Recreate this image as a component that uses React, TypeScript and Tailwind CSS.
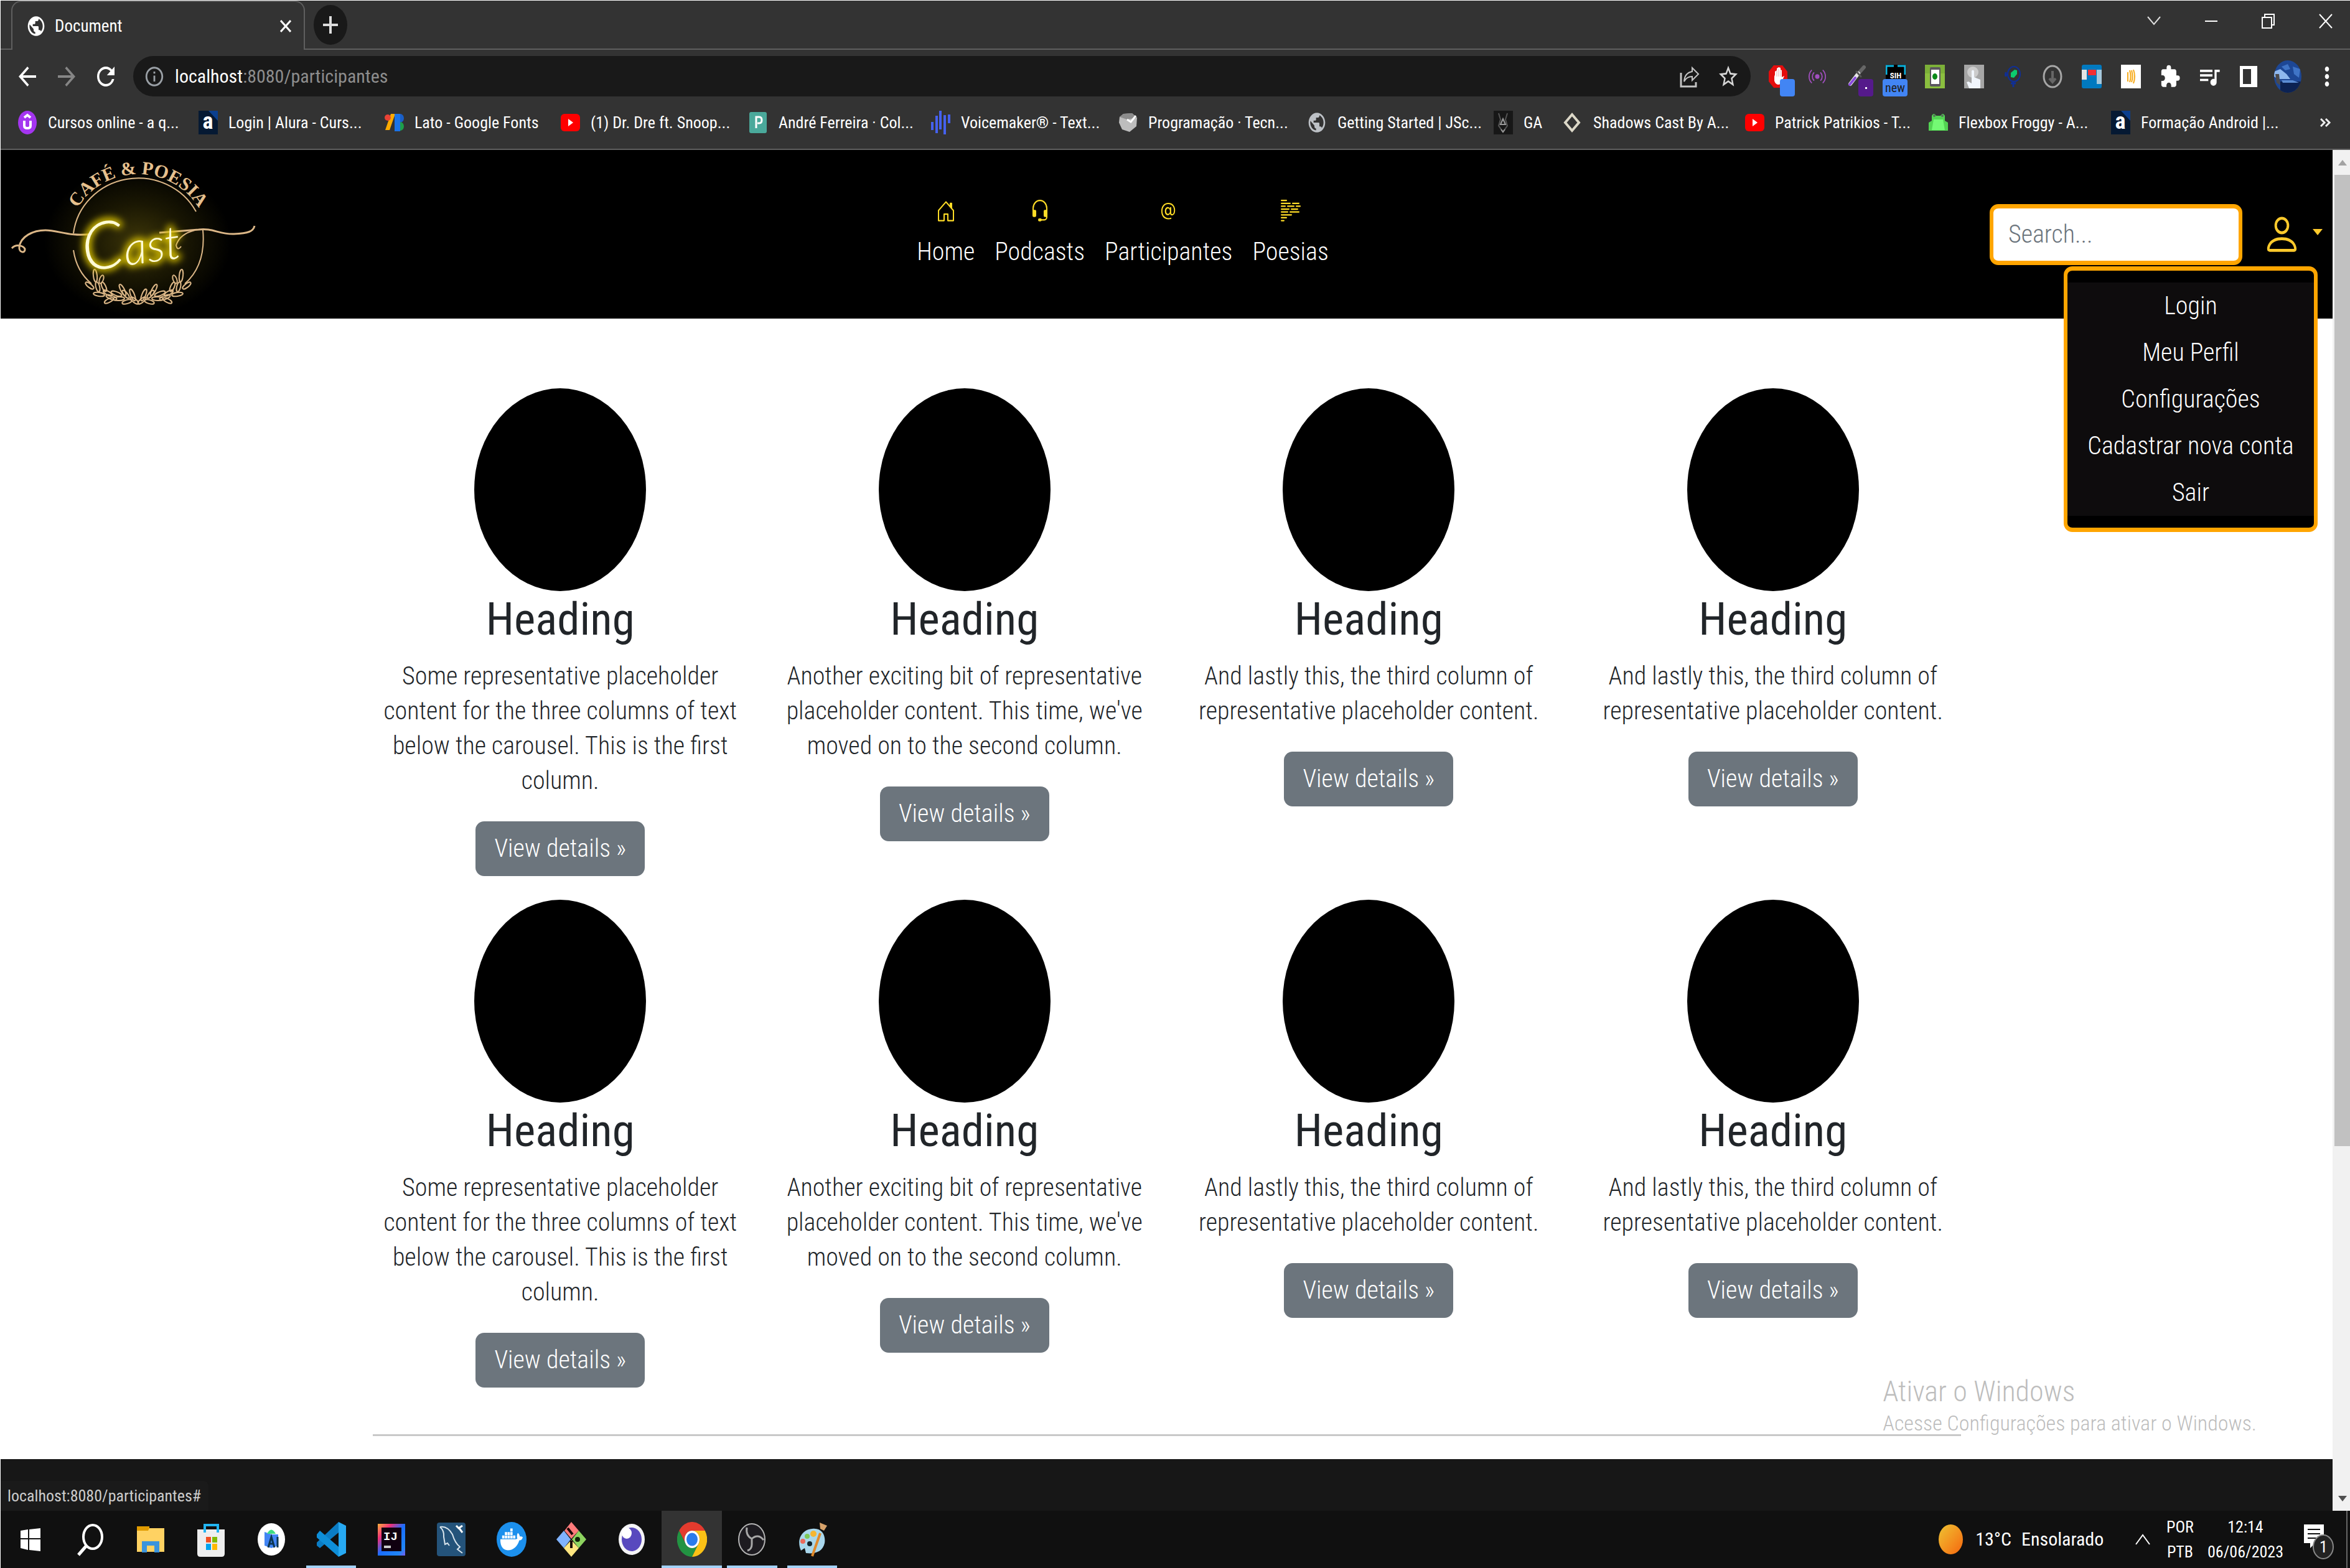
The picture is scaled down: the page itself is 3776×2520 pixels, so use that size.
import type { ReactNode } from "react";
import {
  MdArrowBack,
  MdArrowForward,
  MdRefresh,
  MdInfoOutline,
  MdStarBorder,
  MdExtension,
  MdQueueMusic,
  MdMoreVert,
  MdPublic,
} from "react-icons/md";
import { BsHouseDoor, BsHeadset, BsAt, BsBodyText, BsPerson, BsBroadcast } from "react-icons/bs";
import { FaDocker } from "react-icons/fa";

const fill = { preserveAspectRatio: "none" as const };

/* ---------- Browser chrome ---------- */

function TabStrip() {
  return (
    <div className="flex h-[79px] items-stretch">
      <div className="w-[17px] border-b-2 border-[#5f5f5f]" />
      <div className="flex w-[472px] items-center rounded-t-[16px] border-x-2 border-t-2 border-[#5f5f5f] pl-[22px] pr-[20px]">
        <MdPublic {...fill} className="h-[38px] w-[32px] text-white" />
        <span className="ml-[14px] flex-1 text-[27px] leading-[36px] text-white">Document</span>
        <button aria-label="Fechar guia" className="flex">
          <svg viewBox="0 0 18 20" className="h-[20px] w-[18px]" stroke="#fff" strokeWidth="3">
            <path d="M1 1L17 19M17 1L1 19" />
          </svg>
        </button>
      </div>
      <div className="flex flex-1 items-center border-b-2 border-[#5f5f5f] pl-[14px]">
        <button aria-label="Nova guia" className="flex h-[64px] w-[54px] items-center justify-center rounded-[50%] bg-[#191919]">
          <svg viewBox="0 0 24 28" className="h-[28px] w-[24px]" stroke="#ddd" strokeWidth="4">
            <path d="M12 0V28M0 14H24" />
          </svg>
        </button>
        <div className="ml-auto flex items-center pb-[12px] pr-[28px]">
          <button aria-label="Pesquisar guias" className="mr-[70px] flex">
            <svg viewBox="0 0 22 22" className="h-[22px] w-[22px]" fill="none" stroke="#ddd" strokeWidth="2">
              <path d="M1 4L11 16L21 4" />
            </svg>
          </button>
          <button aria-label="Minimizar" className="mr-[70px] flex">
            <svg viewBox="0 0 22 24" className="h-[24px] w-[22px]" stroke="#fff" strokeWidth="2">
              <path d="M1 12H21" />
            </svg>
          </button>
          <button aria-label="Restaurar" className="mr-[70px] flex">
            <svg viewBox="0 0 22 24" className="h-[24px] w-[22px]" fill="none" stroke="#fff" strokeWidth="2">
              <path d="M1 6H16V23H1ZM5 6V1H20V18H16" />
            </svg>
          </button>
          <button aria-label="Fechar" className="flex">
            <svg viewBox="0 0 22 24" className="h-[24px] w-[22px]" stroke="#fff" strokeWidth="2">
              <path d="M1 1L21 23M21 1L1 23" />
            </svg>
          </button>
        </div>
      </div>
    </div>
  );
}

function ExtIcon({ label, children, badge }: { label: string; children: ReactNode; badge?: ReactNode }) {
  return (
    <button aria-label={label} className="relative flex h-[65px] w-[63px] items-center justify-center">
      {children}
      {badge}
    </button>
  );
}

function Extensions() {
  return (
    <div className="flex items-center">
      <ExtIcon
        label="Bloqueador"
        badge={<span className="absolute bottom-0 left-[35px] h-[28px] w-[24px] rounded-[4px] bg-[#4285f4]" />}
      >
        <svg viewBox="0 0 32 38" className="h-[38px] w-[32px]">
          <path d="M9 1H23L31 11V27L23 37H9L1 27V11Z" fill="#e40d0d" />
          <path d="M11 11V19L10 16V26Q12 32 17 32Q22 31 23 25L26 18L22 20V9L20 8V5L17 4L14 6V9Z" fill="#fff" />
          <path d="M14 9V19M17 7V19M20 9V19" stroke="#e9b0b0" strokeWidth="1" />
        </svg>
      </ExtIcon>
      <ExtIcon label="Transmissão">
        <BsBroadcast {...fill} className="h-[30px] w-[28px] text-[#a24fc0]" />
      </ExtIcon>
      <ExtIcon
        label="Conta-gotas"
        badge={
          <span className="absolute bottom-0 left-[35px] flex h-[28px] w-[24px] items-center justify-center rounded-[4px] bg-[#551a8b]">
            <span className="h-[3px] w-[3px] bg-white" />
          </span>
        }
      >
        <svg viewBox="0 0 32 38" className="h-[38px] w-[32px]" strokeLinecap="round">
          <path d="M20 13L28 4" stroke="#666" strokeWidth="6" />
          <path d="M6 31L19 14" stroke="#e6e6e6" strokeWidth="6" />
          <path d="M5 32L14 21" stroke="#8a4bdc" strokeWidth="4" />
          <path d="M16 11L23 19" stroke="#555" strokeWidth="3" />
        </svg>
      </ExtIcon>
      <ExtIcon
        label="SteamDB"
        badge={
          <span className="absolute bottom-0 left-[11px] h-[28px] w-[40px] rounded-[4px] bg-[#4285f4] text-center text-[20px] font-normal leading-[28px] text-[#202124]">
            new
          </span>
        }
      >
        <svg viewBox="0 0 32 38" className="h-[38px] w-[32px]">
          <rect width="32" height="38" rx="3" fill="#000" />
          <path d="M1 16V2H13M19 2H31V16" fill="none" stroke="#0bb4e0" strokeWidth="3" />
          <text x="16" y="22" fontSize="13" fontWeight="700" textAnchor="middle" fill="#fff">
            SIH
          </text>
        </svg>
      </ExtIcon>
      <ExtIcon label="Dispositivo">
        <svg viewBox="0 0 32 38" className="h-[38px] w-[32px]">
          <rect width="32" height="38" fill="#8bbf3f" />
          <path d="M0 14L32 14V0H0Z" fill="#7cb038" />
          <rect x="8" y="4" width="17" height="31" rx="2" fill="#5b5660" />
          <rect x="10" y="8" width="13" height="23" fill="#fff" />
          <ellipse cx="16" cy="19" rx="4" ry="5" fill="#0a8a1a" />
        </svg>
      </ExtIcon>
      <ExtIcon label="Toque">
        <svg viewBox="0 0 32 38" className="h-[38px] w-[32px]">
          <rect width="32" height="38" fill="#a6a6a6" />
          <circle cx="14" cy="12" r="9" fill="#ccc" />
          <path d="M12 10Q14 7 16 10V20L26 24V38H8L4 28L7 27L12 30Z" fill="#f1f6fc" />
        </svg>
      </ExtIcon>
      <ExtIcon label="Microfone">
        <svg viewBox="0 0 32 38" className="h-[38px] w-[32px]" fill="none">
          <ellipse cx="17" cy="15" rx="10" ry="12" stroke="#102f95" strokeWidth="2" />
          <path d="M2 16H7M4 12V19M16 27V36M12 30H20" stroke="#102f95" strokeWidth="3" />
          <path d="M12 13L18 8L22 9V15L17 21L12 20Z" fill="#0ccb6f" />
        </svg>
      </ExtIcon>
      <ExtIcon label="Download">
        <svg viewBox="0 0 32 38" className="h-[38px] w-[32px]" fill="none">
          <ellipse cx="16" cy="19" rx="14" ry="17" stroke="#a6a6a6" strokeWidth="3" />
          <path d="M16 10V26M11 22L16 28L21 22" stroke="#666" strokeWidth="4" />
        </svg>
      </ExtIcon>
      <ExtIcon label="Trello">
        <svg viewBox="0 0 32 38" className="h-[38px] w-[32px]">
          <rect width="32" height="38" rx="3" fill="#0079bf" />
          <rect y="8" width="8" height="16" fill="#e3e3e3" />
          <rect x="10" y="8" width="13" height="9" fill="#f22f33" />
          <rect x="24" y="8" width="8" height="23" fill="#a5c8dc" />
        </svg>
      </ExtIcon>
      <ExtIcon label="Áudio">
        <svg viewBox="0 0 32 38" className="h-[38px] w-[32px]">
          <rect width="32" height="38" fill="#fff" />
          <path d="M11 12V27M14 9Q17 19 14 28M17 9Q20 19 17 28M20 8Q24 19 20 30" fill="none" stroke="#f7ab1b" strokeWidth="2" />
        </svg>
      </ExtIcon>
      <ExtIcon label="Extensões">
        <MdExtension {...fill} className="h-[40px] w-[34px] text-white" />
      </ExtIcon>
      <ExtIcon label="Controle de mídia">
        <MdQueueMusic {...fill} className="h-[44px] w-[40px] text-white" />
      </ExtIcon>
      <ExtIcon label="Painel lateral">
        <svg viewBox="0 0 28 34" className="h-[34px] w-[28px]">
          <path d="M0 0H28V34H0ZM5 5V29H18V5Z" fill="#fff" fillRule="evenodd" />
        </svg>
      </ExtIcon>
      <ExtIcon label="Perfil">
        <svg viewBox="0 0 44 52" className="h-[52px] w-[44px]">
          <defs>
            <clipPath id="avatar">
              <ellipse cx="22" cy="26" rx="22" ry="26" />
            </clipPath>
          </defs>
          <g clipPath="url(#avatar)">
            <rect width="44" height="52" fill="#1d4795" />
            <path d="M0 18L10 14L20 22L26 30H6L0 26Z" fill="#8fb8ee" />
            <path d="M12 10L22 6L26 14L18 16ZM30 10L42 14L40 28L32 22Z" fill="#3f74c6" />
            <path d="M10 34H44V52H10Z" fill="#0c2252" />
            <path d="M2 22H8L10 40L4 36Z" fill="#4b4a4c" />
            <path d="M12 32H30L40 36H14Z" fill="#5b8cd2" />
          </g>
        </svg>
      </ExtIcon>
      <ExtIcon label="Menu">
        <MdMoreVert {...fill} className="h-[48px] w-[40px] text-white" />
      </ExtIcon>
    </div>
  );
}

function Toolbar() {
  return (
    <div className="flex h-[85px] items-center pl-[22px] pr-[6px]">
      <button aria-label="Voltar" className="flex w-[63px]">
        <MdArrowBack {...fill} className="h-[48px] w-[42px] text-white" />
      </button>
      <button aria-label="Avançar" className="flex w-[63px]">
        <MdArrowForward {...fill} className="h-[48px] w-[42px] text-[#868686]" />
      </button>
      <button aria-label="Recarregar" className="flex w-[65px]">
        <MdRefresh {...fill} className="h-[48px] w-[42px] text-white" />
      </button>
      <div className="flex h-[65px] flex-1 items-center rounded-full bg-[#191919] pl-[17px] pr-[18px]">
        <MdInfoOutline {...fill} className="h-[38px] w-[34px] text-[#9aa0a6]" />
        <label className="relative ml-[16px] flex-1 text-[30px] leading-[40px]">
          <span className="text-white">localhost</span>
          <span className="text-[#8d8d8d]">:8080/participantes</span>
          <input aria-label="Endereço" className="absolute inset-0 w-full bg-transparent outline-none" />
        </label>
        <button aria-label="Compartilhar" className="mr-[28px] flex">
          <svg viewBox="0 0 32 36" className="h-[36px] w-[32px]" fill="none" stroke="#c4c4c4" strokeWidth="3">
            <path d="M2 12V34H26V27" />
            <path d="M20 4L30 14L20 24V18Q11 18 7 26Q8 12 20 10Z" strokeWidth="2" />
          </svg>
        </button>
        <button aria-label="Favoritos" className="flex">
          <MdStarBorder {...fill} className="h-[42px] w-[36px] text-[#d6d6d6]" />
        </button>
      </div>
      <div className="w-[12px]" />
      <Extensions />
    </div>
  );
}

const alura = (
  <svg viewBox="0 0 31 38" className="h-[38px] w-[31px] overflow-visible">
    <rect width="31" height="38" fill="#051933" />
    <path d="M16 0H31V16Z" fill="#0b3f8f" />
    <text x="15" y="29" fontSize="36" fontWeight="700" textAnchor="middle" fill="#fff">
      a
    </text>
  </svg>
);

const youtube = (
  <svg viewBox="0 0 31 28" className="h-[28px] w-[31px]">
    <rect width="31" height="28" rx="6" fill="#f00" />
    <path d="M12 8L20 14L12 20Z" fill="#fff" />
  </svg>
);

const bookmarks: { text: string; width: string; icon: ReactNode }[] = [
  {
    text: "Cursos online - a q...",
    width: "w-[290px]",
    icon: (
      <svg viewBox="0 0 31 38" className="h-[38px] w-[31px]">
        <ellipse cx="15" cy="19" rx="15" ry="19" fill="#a435f0" />
        <path d="M10 16V24Q10 28 15 28T20 24V16M10 11L15 7L20 11" fill="none" stroke="#fff" strokeWidth="4" />
      </svg>
    ),
  },
  { text: "Login | Alura - Curs...", width: "w-[299px]", icon: alura },
  {
    text: "Lato - Google Fonts",
    width: "w-[283px]",
    icon: (
      <svg viewBox="0 0 31 28" className="h-[28px] w-[31px]">
        <path d="M10 0H17L8 26H1Z" fill="#fbab00" />
        <rect x="16" width="9" height="28" fill="#1a73e8" />
        <circle cx="5" cy="6" r="5" fill="#ea4335" />
        <path d="M25 0A6 7 0 0 1 25 14Z" fill="#1a5fc8" />
        <path d="M25 13A6 7 0 0 1 25 27Z" fill="#1e9e4a" />
      </svg>
    ),
  },
  { text: "(1) Dr. Dre ft. Snoop...", width: "w-[302px]", icon: youtube },
  {
    text: "André Ferreira · Col...",
    width: "w-[293px]",
    icon: (
      <svg viewBox="0 0 31 34" className="h-[34px] w-[31px]">
        <rect x="1" width="28" height="34" rx="3" fill="#4aa99b" />
        <path d="M12 26V8H17Q21 8 21 13T17 18H14" fill="none" stroke="#fff" strokeWidth="3" />
      </svg>
    ),
  },
  {
    text: "Voicemaker® - Text...",
    width: "w-[301px]",
    icon: (
      <svg viewBox="0 0 31 38" className="h-[38px] w-[31px]" stroke="#4561ef" strokeWidth="4">
        <path d="M2 18V31M9 8V36M15 0V30M22 7V38M29 6V20" />
      </svg>
    ),
  },
  {
    text: "Programação · Tecn...",
    width: "w-[303px]",
    icon: (
      <svg viewBox="0 0 31 32" className="h-[32px] w-[31px]">
        <path d="M8 2L22 1L30 8L29 22L18 31L6 27L1 16L2 7Z" fill="#bdbdbd" />
        <path d="M2 7L14 11L30 8L22 1L8 2Z" fill="#8c8c8c" />
        <path d="M14 11L20 15L28 5" fill="none" stroke="#fff" strokeWidth="3" />
      </svg>
    ),
  },
  {
    text: "Getting Started | JSc...",
    width: "w-[300px]",
    icon: <MdPublic {...fill} className="h-[38px] w-[32px] text-[#bdc1c6]" />,
  },
  {
    text: "GA",
    width: "w-[112px]",
    icon: (
      <svg viewBox="0 0 31 38" className="h-[38px] w-[31px]" fill="none">
        <rect width="31" height="38" fill="#171717" />
        <path d="M8 4L11 14L8 24L15 34L22 24L19 14L22 4" stroke="#555" strokeWidth="2" />
        <path d="M11 22L15 13L19 22ZM12 30L15 34L18 30" stroke="#999" strokeWidth="2" />
      </svg>
    ),
  },
  {
    text: "Shadows Cast By A...",
    width: "w-[292px]",
    icon: (
      <svg viewBox="0 0 31 34" className="h-[34px] w-[31px]" fill="none">
        <path d="M14 4L25 17L14 30L3 17Z" stroke="#dcd8c8" strokeWidth="4" />
      </svg>
    ),
  },
  { text: "Patrick Patrikios - T...", width: "w-[295px]", icon: youtube },
  {
    text: "Flexbox Froggy - A...",
    width: "w-[293px]",
    icon: (
      <svg viewBox="0 0 31 30" className="h-[30px] w-[31px]">
        <path d="M5 8V4Q8 -2 12 4H19Q23 -2 26 4V12L31 15V28H0V15L5 12Z" fill="#53d453" />
        <path d="M8 10H23L26 27H5Z" fill="#74fa74" />
        <circle cx="9" cy="4" r="2" fill="#54735a" />
        <circle cx="22" cy="4" r="2" fill="#54735a" />
      </svg>
    ),
  },
  { text: "Formação Android |...", width: "w-[290px]", icon: alura },
];

function BookmarksBar() {
  return (
    <nav aria-label="Favoritos" className="flex h-[76px] items-center border-b-2 border-[#5f5f5f] pb-[10px] pl-[28px] pr-[30px]">
      {bookmarks.map((b) => (
        <a key={b.text} href="#" className={`flex shrink-0 items-center ${b.width}`}>
          {b.icon}
          <span className="ml-[17px] whitespace-nowrap text-[26px] leading-[36px] text-white">{b.text}</span>
        </a>
      ))}
      <button aria-label="Mais favoritos" className="ml-auto flex">
        <svg viewBox="0 0 18 14" className="h-[14px] w-[18px]" fill="none" stroke="#eee" strokeWidth="3">
          <path d="M1 1L7 7L1 13M9 1L15 7L9 13" />
        </svg>
      </button>
    </nav>
  );
}

/* ---------- Site ---------- */

const leaves: [number, number, number, number][] = [
  [152, 201, 10, -6],
  [162, 207, 7, 20],
  [143, 217, 8, -52],
  [156, 219, 8, -14],
  [166, 219, 8, -24],
  [158, 231, 9, -82],
  [172, 229, 8, -60],
  [178, 236, 9, -70],
  [186, 230, 9, -70],
  [196, 224, 10, -28],
  [174, 241, 8, 62],
  [190, 238, 9, 88],
  [201, 231, 8, -40],
  [203, 243, 8, 74],
  [212, 232, 10, -22],
  [215, 241, 8, -50],
];

function Logo() {
  return (
    <svg viewBox="0 0 430 270" className="h-[270px] w-[410px]" preserveAspectRatio="xMinYMid slice" aria-label="Café & Poesia Cast">
      <defs>
        <radialGradient id="halo">
          <stop offset="0" stopColor="#3d3608" />
          <stop offset="0.5" stopColor="#1a1703" />
          <stop offset="1" stopColor="#000" />
        </radialGradient>
        <filter id="neon" x="-40%" y="-40%" width="180%" height="180%">
          <feGaussianBlur stdDeviation="6" />
        </filter>
        <path id="arc" d="M109 146A112 108 0 0 1 333 146" />
      </defs>
      <ellipse cx="220" cy="146" rx="150" ry="120" fill="url(#halo)" />
      <g fill="none" stroke="#dcb787" strokeWidth="2">
        <path d="M117 133A105 101 0 0 1 314 98" />
        <path d="M117 160Q122 194 146 214M325 128Q330 184 296 214" />
        <g strokeWidth="3">
          <path d="M18 157C24 150 36 152 39 158C40 166 29 164 30 155C32 138 52 128 72 128S112 139 146 134" />
          <path d="M255 132L318 127C340 124 352 135 375 134S406 130 408 121" />
        </g>
        <path d="M312 128Q288 134 282 152Q284 162 290 154" />
        {leaves.map(([x, y, r, a], i) => (
          <g key={i}>
            <ellipse cx={x} cy={y} rx="3" ry={r} transform={`rotate(${a} ${x} ${y})`} />
            <ellipse cx={442 - x} cy={y} rx="3" ry={r} transform={`rotate(${-a} ${442 - x} ${y})`} />
          </g>
        ))}
      </g>
      <text fontFamily="'Liberation Serif', serif" fontSize="30" fontWeight="700" fill="#e6c08e">
        <textPath href="#arc" startOffset="50%" textAnchor="middle">
          CAFÉ &amp; POESIA
        </textPath>
      </text>
      <g fontFamily="Lato, sans-serif" fontStyle="italic" fontWeight="300" fontSize="74" transform="rotate(-8 220 150)">
        <text x="130" y="182" fill="#d8c000" stroke="#d8c000" strokeWidth="8" filter="url(#neon)">
          <tspan fontSize="106">C</tspan>ast
        </text>
        <text x="130" y="182" fill="#fffbd6">
          <tspan fontSize="106">C</tspan>ast
        </text>
      </g>
    </svg>
  );
}

const links = [
  { text: "Home", icon: <BsHouseDoor {...fill} className="h-[37px] w-[32px]" /> },
  { text: "Podcasts", icon: <BsHeadset {...fill} className="h-[37px] w-[32px]" /> },
  { text: "Participantes", icon: <BsAt {...fill} className="h-[37px] w-[32px]" /> },
  { text: "Poesias", icon: <BsBodyText {...fill} className="h-[37px] w-[32px]" /> },
];

const menu = ["Login", "Meu Perfil", "Configurações", "Cadastrar nova conta", "Sair"];

function Header() {
  return (
    <header className="flex h-[271px] items-center bg-black pr-[16px]">
      <a href="#" className="shrink-0">
        <Logo />
      </a>
      <nav className="flex flex-1 justify-center gap-[32px]">
        {links.map((l) => (
          <a key={l.text} href="#" className="flex flex-col items-center gap-[19px] text-[#ffdc26]">
            {l.icon}
            <span className="text-[40px] font-light leading-[56px] text-white">{l.text}</span>
          </a>
        ))}
      </nav>
      <div className="relative flex items-center">
        <input
          aria-label="Search"
          placeholder="Search..."
          className="h-[98px] w-[406px] rounded-[14px] border-x-[6px] border-y-[7px] border-[#ffa500] bg-white px-[24px] text-[40px] font-light text-[#212529] placeholder:text-[#6c757d]"
        />
        <button aria-label="Conta" className="ml-[32px] flex items-center text-[#ffca2c]">
          <BsPerson {...fill} className="h-[75px] w-[63px]" />
          <svg viewBox="0 0 16 10" className="mb-[8px] ml-[18px] h-[10px] w-[16px]">
            <path d="M0 0H16L8 10Z" fill="currentColor" />
          </svg>
        </button>
        <ul className="absolute right-[8px] top-full z-10 mt-[2px] w-[408px] rounded-[14px] border-x-[6px] border-y-[7px] border-[#ffa500] bg-black py-[19px]">
          {menu.map((m) => (
            <li key={m} className="bg-[#0e0c0d]">
              <a href="#" className="block whitespace-nowrap py-[9px] text-center text-[40px] font-light leading-[57px] text-white">
                {m}
              </a>
            </li>
          ))}
        </ul>
      </div>
    </header>
  );
}

const first = "Some representative placeholder content for the three columns of text below the carousel. This is the first column.";
const second = "Another exciting bit of representative placeholder content. This time, we've moved on to the second column.";
const third = "And lastly this, the third column of representative placeholder content.";
const cards = [first, second, third, third, first, second, third, third];

function Main() {
  return (
    <main className="bg-white pt-[112px] text-[#212529]">
      <div className="mx-auto max-w-[2600px] px-[1px]">
        <div className="grid grid-cols-4 gap-y-[38px] text-center">
          {cards.map((text, i) => (
            <section key={i} className="flex flex-col items-center px-[24px]">
              <div className="h-[326px] w-[276px] rounded-[50%] bg-black" />
              <h2 className="mb-[19px] text-[73px] leading-[90px]">Heading</h2>
              <p className="mb-[37px] text-[40px] font-light leading-[56px]">{text}</p>
              <a
                href="#"
                className="rounded-[14px] bg-[#6c757d] px-[30px] py-[16px] text-[40px] font-light leading-[56px] text-white"
              >
                View details »
              </a>
            </section>
          ))}
        </div>
        <hr className="mx-[23px] mb-[37px] mt-[75px] border-t-[3px] border-[#c8c8c8]" />
      </div>
    </main>
  );
}

function Scrollbar() {
  return (
    <div className="flex w-[28px] flex-col bg-[#f1f1f1] pl-[3px]">
      <div className="flex h-[40px] items-center justify-center">
        <svg viewBox="0 0 14 9" className="h-[9px] w-[14px]">
          <path d="M0 9L7 0L14 9Z" fill="#a3a3a3" />
        </svg>
      </div>
      <div className="flex-[1561] bg-[#c1c1c1]" />
      <div className="flex-[546]" />
      <div className="flex h-[40px] items-center justify-center">
        <svg viewBox="0 0 14 9" className="h-[9px] w-[14px]">
          <path d="M0 0L7 9L14 0Z" fill="#505050" />
        </svg>
      </div>
    </div>
  );
}

/* ---------- Taskbar ---------- */

const box = "h-[56px] w-[48px]";

const apps: { name: string; icon: ReactNode; open?: boolean; active?: boolean }[] = [
  {
    name: "Iniciar",
    icon: (
      <svg viewBox="0 0 48 56" className={box} fill="#fff">
        <path d="M8 14L20 12V26H8ZM22 12L40 10V26H22ZM8 28H20V45L8 42ZM22 28H40V47L22 45Z" />
      </svg>
    ),
  },
  {
    name: "Pesquisar",
    icon: (
      <svg viewBox="0 0 48 56" className={box} fill="none" stroke="#fff" strokeWidth="4">
        <ellipse cx="27" cy="24" rx="15" ry="19" />
        <path d="M17 38L4 53" strokeWidth="5" />
      </svg>
    ),
  },
  {
    name: "Explorador de Arquivos",
    icon: (
      <svg viewBox="0 0 48 56" className={box}>
        <rect x="2" y="7" width="20" height="10" fill="#e09b00" />
        <path d="M2 14H20L22 10H46V48H2Z" fill="#ffd262" />
        <path d="M10 49V31H38V49H30V38H18V49Z" fill="#3b94dc" />
      </svg>
    ),
  },
  {
    name: "Microsoft Store",
    icon: (
      <svg viewBox="0 0 48 56" className={box}>
        <path d="M2 12H46V51Q46 56 41 56H7Q2 56 2 51Z" fill="#eee" />
        <path d="M14 17V5H35V17" fill="none" stroke="#22b5f2" strokeWidth="4" />
        <rect x="16" y="24" width="8" height="9" fill="#f25022" />
        <rect x="26" y="24" width="8" height="9" fill="#7fba00" />
        <rect x="16" y="35" width="8" height="10" fill="#00a4ef" />
        <rect x="26" y="35" width="8" height="10" fill="#ffb900" />
      </svg>
    ),
  },
  {
    name: "Android Studio",
    icon: (
      <svg viewBox="0 0 48 56" className={box}>
        <ellipse cx="24" cy="28" rx="22" ry="26" fill="#fff" />
        <path d="M13 16L24 20H35V38L24 42L13 38Z" fill="#4285f4" />
        <path d="M17 19Q24 6 31 19Z" fill="#3ddc84" />
        <path d="M19 41L24 24L29 41M21 35H27M34 24V41" fill="none" stroke="#0b3550" strokeWidth="3" />
      </svg>
    ),
  },
  {
    name: "Visual Studio Code",
    open: true,
    icon: (
      <svg viewBox="0 0 48 56" className={box}>
        <path d="M36 0V17L6 42L1 38V33Z" fill="#0b7cc4" />
        <path d="M1 20L6 14L36 40V56L1 25Z" fill="#0e8ed8" />
        <path d="M36 0L48 6V50L36 56Z" fill="#27a9f2" />
      </svg>
    ),
  },
  {
    name: "IntelliJ IDEA",
    icon: (
      <svg viewBox="0 0 48 56" className={box}>
        <defs>
          <linearGradient id="ij" x1="0" y1="0" x2="1" y2="1">
            <stop offset="0" stopColor="#ffb03a" />
            <stop offset="0.25" stopColor="#f0307a" />
            <stop offset="0.5" stopColor="#1a6dff" />
            <stop offset="0.85" stopColor="#1f86f5" />
            <stop offset="1" stopColor="#7a5cf0" />
          </linearGradient>
        </defs>
        <rect x="2" y="3" width="44" height="51" fill="url(#ij)" />
        <rect x="8" y="9" width="32" height="38" fill="#100010" />
        <text x="11" y="29" fontFamily="'Liberation Mono', monospace" fontSize="19" fontWeight="700" fill="#fff">
          IJ
        </text>
        <rect x="12" y="38" width="11" height="4" fill="#ccc" />
      </svg>
    ),
  },
  {
    name: "MySQL Workbench",
    icon: (
      <svg viewBox="0 0 48 56" className={box} fill="none">
        <rect x="1" y="1" width="46" height="54" rx="4" fill="#24537a" />
        <path d="M6 8Q13 14 12 24L14 36L18 34L21 38M6 8Q18 6 26 20Q30 34 38 40L34 44L42 50" stroke="#d8e4ec" strokeWidth="2" />
        <path d="M32 6L36 10L42 6M36 9L42 17" stroke="#fff" strokeWidth="3" />
      </svg>
    ),
  },
  {
    name: "Docker",
    icon: (
      <span className="flex h-[56px] w-[48px] items-center justify-center rounded-[50%] bg-[#1c90ed]">
        <FaDocker {...fill} className="h-[40px] w-[36px] text-white" />
      </span>
    ),
  },
  {
    name: "Git",
    icon: (
      <svg viewBox="0 0 48 56" className={box}>
        <path d="M24 0L36 14L24 27L13 14Z" fill="#ff7b7b" />
        <path d="M12 14L23 28L12 42L0 28Z" fill="#80b3ff" />
        <path d="M36 14L48 28L36 42L25 28Z" fill="#8dd35f" />
        <path d="M24 29L36 42L24 56L12 42Z" fill="#ffe680" />
        <circle cx="34" cy="28" r="4" fill="#10210a" />
        <path d="M24 30V42M18 10L26 20" stroke="#1a0808" strokeWidth="4" />
      </svg>
    ),
  },
  {
    name: "Insomnia",
    icon: (
      <svg viewBox="0 0 48 56" className={box}>
        <ellipse cx="24" cy="28" rx="21" ry="25" fill="#f4f4f6" />
        <ellipse cx="24" cy="28" rx="16" ry="19" fill="#5849be" />
        <ellipse cx="16" cy="18" rx="8" ry="9" fill="#fff" />
      </svg>
    ),
  },
  {
    name: "Google Chrome",
    open: true,
    active: true,
    icon: (
      <svg viewBox="0 0 48 48" className={box} preserveAspectRatio="none">
        <path d="M24 12H44.8A24 24 0 0 0 3.2 12L13.6 30A12 12 0 0 1 24 12Z" fill="#e33b2e" />
        <path d="M3.2 12A24 24 0 0 0 24 48L34.4 30A12 12 0 0 1 13.6 30Z" fill="#229342" />
        <path d="M24 48A24 24 0 0 0 44.8 12H24A12 12 0 0 1 34.4 30Z" fill="#fbc116" />
        <circle cx="24" cy="24" r="12" fill="#fff" />
        <circle cx="24" cy="24" r="9" fill="#2a7bec" />
      </svg>
    ),
  },
  {
    name: "OBS Studio",
    open: true,
    icon: (
      <svg viewBox="0 0 48 56" className={box} fill="none">
        <ellipse cx="24" cy="28" rx="21" ry="25" fill="#1d1b20" stroke="#b5b5b5" strokeWidth="2" />
        <path d="M16 9Q14 22 24 27Q34 18 43 29M24 27V36Q24 44 17 46" stroke="#a8a8a8" strokeWidth="3" />
      </svg>
    ),
  },
  {
    name: "Paint",
    open: true,
    icon: (
      <svg viewBox="0 0 48 56" className={box}>
        <path d="M24 11C40 9 46 22 44 34C41 48 28 52 14 50L12 42L6 46C-2 28 8 12 24 11Z" fill="#a9d7ec" />
        <circle cx="26" cy="19" r="5" fill="#f6b632" />
        <circle cx="16" cy="23" r="4" fill="#7cc857" />
        <circle cx="9" cy="31" r="4" fill="#ea6a5c" />
        <ellipse cx="20" cy="35" rx="4" ry="4" fill="#10222c" />
        <path d="M37 18L24 55" stroke="#e08a2c" strokeWidth="4" />
        <path d="M36 1L48 6L43 14L37 11Z" fill="#d6a26a" />
      </svg>
    ),
  },
];

function Taskbar() {
  return (
    <footer className="flex h-[92px] items-stretch justify-between bg-[#101010] text-[26px] leading-[36px] text-white">
      <div className="flex w-[1352px] shrink-0">
        {apps.map((a) => (
          <button
            key={a.name}
            aria-label={a.name}
            className={`relative flex flex-1 items-center justify-center ${a.active ? "bg-[#333333]" : ""}`}
          >
            {a.icon}
            {a.open && (
              <span className={`absolute bottom-0 h-[4px] bg-[#a3d2fb] ${a.active ? "inset-x-0" : "inset-x-[8px]"}`} />
            )}
          </button>
        ))}
      </div>
      <div className="flex items-center pr-[4px]">
        <span className="h-[48px] w-[39px] rounded-[50%] bg-linear-to-br from-[#ecc232] to-[#f4640c]" />
        <span className="ml-[20px] text-[30px]">13°C</span>
        <span className="ml-[16px] w-[134px] whitespace-nowrap text-[30px]">Ensolarado</span>
        <button aria-label="Ícones ocultos" className="ml-[48px] flex">
          <svg viewBox="0 0 26 18" className="h-[18px] w-[26px]" fill="none" stroke="#fff" strokeWidth="2">
            <path d="M2 17L13 2L24 17" />
          </svg>
        </button>
        <div className="ml-[22px] flex w-[50px] flex-col items-center gap-[4px]">
          <span>POR</span>
          <span>PTB</span>
        </div>
        <div className="ml-[20px] flex w-[120px] flex-col items-center gap-[4px]">
          <span>12:14</span>
          <span>06/06/2023</span>
        </div>
        <button aria-label="Notificações" className="relative ml-[30px] mr-[18px] flex">
          <svg viewBox="0 0 54 64" className="h-[64px] w-[54px]">
            <path d="M4 8H36V38H22L14 46V38H4Z" fill="#fff" />
            <path d="M10 16H30M10 23H30M10 30H24" stroke="#101010" strokeWidth="2" />
            <ellipse cx="35" cy="44" rx="16" ry="19" fill="#222" stroke="#888" strokeWidth="2" />
          </svg>
          <span className="absolute left-[29px] top-[26px] text-[26px]">1</span>
        </button>
        <span className="h-full w-[2px] bg-[#666666]" />
      </div>
    </footer>
  );
}

export default function App() {
  return (
    <div className="flex min-h-screen flex-col border-l border-t border-white bg-[#333333] font-['Roboto_Condensed','Roboto',sans-serif]">
      <TabStrip />
      <Toolbar />
      <BookmarksBar />
      <div className="relative flex flex-1">
        <div className="flex min-w-0 flex-1 flex-col">
          <Header />
          <Main />
          <div className="flex-1 bg-[#171717]" />
        </div>
        <Scrollbar />
        <div className="absolute bottom-0 left-0 rounded-tr-[8px] bg-[#1a1a1a] py-[7px] pl-[11px] pr-[12px] text-[26px] leading-[34px] text-[#cccccc]">
          localhost:8080/participantes#
        </div>
        <div className="pointer-events-none absolute bottom-[118px] right-[150px] text-[#bdbdbd]">
          <p className="text-[46px] font-light leading-[56px]">Ativar o Windows</p>
          <p className="text-[34px] font-light leading-[46px]">Acesse Configurações para ativar o Windows.</p>
        </div>
      </div>
      <Taskbar />
    </div>
  );
}
